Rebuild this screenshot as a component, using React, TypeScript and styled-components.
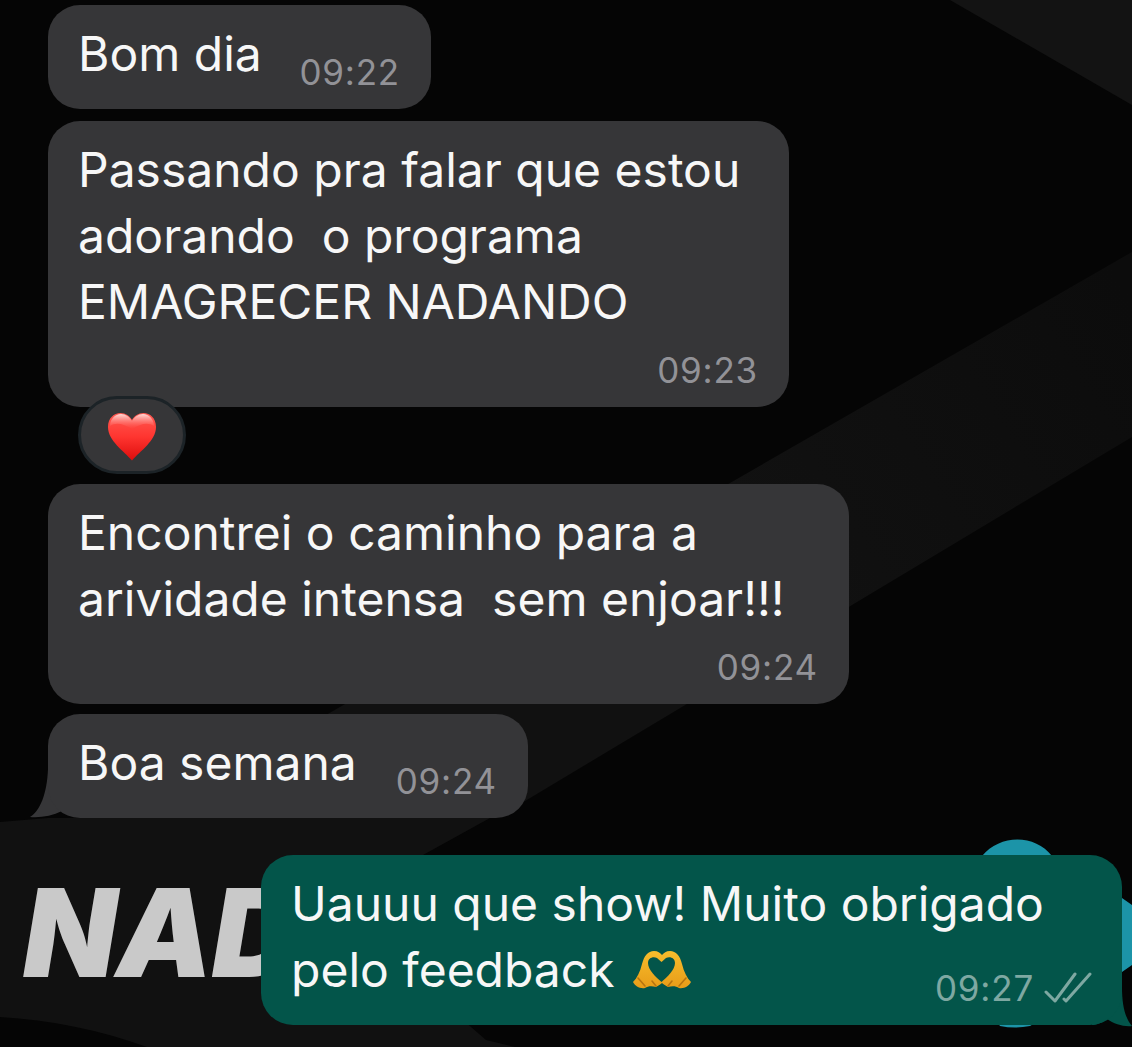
import React from 'react';
import styled, {createGlobalStyle} from 'styled-components';

const GlobalStyle = createGlobalStyle`
    html, body {
        margin: 0;
        padding: 0;
        background: #050505;
    }
`

const Heart = () => (
    <svg width="50" height="50" viewBox="0 0 50 50">
        <defs>
            <linearGradient id="heartFill" x1="0" y1="0" x2="0" y2="1">
                <stop offset="0" stopColor="#ff5a52"/>
                <stop offset="0.5" stopColor="#ff3530"/>
                <stop offset="1" stopColor="#dd0d0d"/>
            </linearGradient>
            <linearGradient id="heartGloss" x1="0" y1="0" x2="0" y2="1">
                <stop offset="0" stopColor="#ffe3e0" stopOpacity="0.95"/>
                <stop offset="1" stopColor="#ff6a64" stopOpacity="0"/>
            </linearGradient>
        </defs>
        <path
            d="M25 48.500C17 39 1 29 1 15 1 6 7 1 13.500 1 18.500 1 22.800 4 25 8 27.200 4 31.500 1 36.500 1 43 1 49 6 49 15 49 29 33 39 25 48.500Z"
            fill="url(#heartFill)"/>
        <path
            d="M3 14C3 7 8 2 14 2 18.500 2 22.800 5 25 9 27.200 5 31.500 2 36 2 42 2 47 7 47 14 41 10 33 12 25 17 17 12 9 10 3 14Z"
            fill="url(#heartGloss)"/>
    </svg>
);

const HeartHands = () => (
    <svg width="60" height="40" viewBox="0 0 60 40">
        <defs>
            <linearGradient id="handFill" x1="0" y1="0" x2="0" y2="1">
                <stop offset="0" stopColor="#f7bd2c"/>
                <stop offset="1" stopColor="#e89c18"/>
            </linearGradient>
        </defs>
        <path
            d="M1 32C5 28 8 22 10 14 12 6 16 1 22 1 26 1 28 3 30 5 32 3 34 1 38 1 44 1 48 6 50 14 52 22 55 28 59 32 57 36 52 39 47 38 44 36 40 36 36 37 33 35 31 34 30 33 29 34 27 35 24 37 20 36 16 36 13 38 8 39 3 36 1 32Z"
            fill="url(#handFill)"/>
        <path d="M29.500 32C24 27 16 20 16 13 16 8 21 6 25 8L29.500 12 34 8C38 6 43 8 43 13 43 20 35 27 29.500 32Z"
              fill="#03554a"/>
        <path d="M6 28L13 36M54 28L47 36M24 36L20 31M36 36L40 31" stroke="#b8740f"
              strokeWidth="1.600" fill="none" strokeLinecap="round"/>
    </svg>
);

const DoubleCheck = () => (
    <svg width="48" height="32" viewBox="0 0 48 32" fill="none" stroke="#7ea8a2" strokeWidth="3"
         strokeLinecap="round" strokeLinejoin="round">
        <path d="M2 20L11 29 31 2"/>
        <path d="M20 27L22 29 46 2"/>
    </svg>
);

export default function App() {
    return (
        <Page>
            <GlobalStyle/>
            <Wallpaper>
                <svg width="1132" height="1047" viewBox="0 0 1132 1047">
                    <defs>
                        <linearGradient id="band" x1="1132" y1="300" x2="500" y2="700" gradientUnits="userSpaceOnUse">
                            <stop offset="0" stopColor="#0c0c0c"/>
                            <stop offset="0.6" stopColor="#111111"/>
                        </linearGradient>
                    </defs>
                    <path d="M950 0L1132 105V0Z" fill="#131313"/>
                    <path d="M1132 252L300 730 520 804 1132 437Z" fill="url(#band)"/>
                    <path d="M0 822L48 818H490L423 855 440 1000 486 1040 515 1047H147C100 1030 50 1020 0 1017Z"
                          fill="#111111"/>
                    <path
                        d="M982 856C1000 834 1035 834 1052 856L1122 898 1132 905V965L1122 972 1030 1026Q1015 1029 1000 1026L982 1000Z"
                        fill="#1c94a8"/>
                </svg>
                <Logo>NAD</Logo>
            </Wallpaper>
            <Chat>
                <Bubble width={383}>
                    <InlineRow>
                        <Text>Bom dia</Text>
                        <Time>09:22</Time>
                    </InlineRow>
                </Bubble>
                <Bubble width={741} spacing={12}>
                    <Text>Passando pra falar que estou{'\n'}adorando  o programa{'\n'}EMAGRECER NADANDO</Text>
                    <Footer>
                        <Time>09:23</Time>
                    </Footer>
                    <Reaction>
                        <Heart/>
                    </Reaction>
                </Bubble>
                <Bubble width={801} spacing={77}>
                    <Text>Encontrei o caminho para a{'\n'}arividade intensa  sem enjoar!!!</Text>
                    <Footer>
                        <Time>09:24</Time>
                    </Footer>
                </Bubble>
                <Bubble width={480} spacing={10}>
                    <InlineRow>
                        <Text>Boa semana</Text>
                        <Time>09:24</Time>
                    </InlineRow>
                    <TailIn width="60" height="49" viewBox="0 0 60 49">
                        <path d="M18 0C17 25 10 42 0 48 10 49 22 47 32 42 38 46 44 48 50 48H60V0Z" fill="#363638"/>
                    </TailIn>
                </Bubble>
                <OutBubble>
                    <Text>Uauuu que show! Muito obrigado</Text>
                    <LastLine>
                        <Text>pelo feedback <EmojiSlot><HeartHands/></EmojiSlot></Text>
                        <OutMeta>
                            <Time outgoing>09:27</Time>
                            <DoubleCheck/>
                        </OutMeta>
                    </LastLine>
                    <TailOut width="40" height="40" viewBox="0 0 40 40">
                        <path d="M30 0C30 18 33 31 40 39 32 40 22 37 15 32 10 36 4 38 0 38V0Z" fill="#03554a"/>
                    </TailOut>
                </OutBubble>
            </Chat>
        </Page>
    );
};

const Page = styled.div`
    position: relative;
    width: 1132px;
    height: 1047px;
    overflow: hidden;
    background: #050505;
    font-family: Inter, "Noto Sans", sans-serif;
`

const Wallpaper = styled.div`
    position: absolute;
    inset: 0;

    svg {
        display: block;
    }
`

const Logo = styled.span`
    position: absolute;
    left: 23px;
    top: 860px;
    font-family: Inter, sans-serif;
    font-size: 122px;
    line-height: 146px;
    font-weight: 900;
    font-style: italic;
    letter-spacing: -1px;
    color: #c9c9c9;
`

const Chat = styled.div`
    position: relative;
    isolation: isolate;
    display: flex;
    flex-direction: column;
    padding: 5px 10px 0 48px;
`

const Bubble = styled.div<{ width: number; spacing?: number }>`
    position: relative;
    box-sizing: border-box;
    width: ${props => props.width}px;
    margin-top: ${props => props.spacing ?? 0}px;
    padding: 16px 31px 17px 30px;
    border-radius: 32px;
    background: #363638;
`

const OutBubble = styled.div`
    position: relative;
    box-sizing: border-box;
    width: 861px;
    margin: 37px 0 0 213px;
    padding: 16px 30px 17px 30px;
    border-radius: 32px;
    background: #03554a;
`

const Text = styled.div`
    font-size: 48px;
    line-height: 66px;
    color: #f7f7f7;
    white-space: pre;
`

const Time = styled.span<{ outgoing?: boolean }>`
    font-size: 35px;
    line-height: 40px;
    letter-spacing: 0.8px;
    color: ${props => (props.outgoing ? '#7ea8a2' : '#929297')};
`

const InlineRow = styled.div`
    display: flex;
    justify-content: space-between;
    align-items: flex-end;

    ${Text} {
        padding-bottom: 5px;
    }
`

const Footer = styled.div`
    display: flex;
    justify-content: flex-end;
    margin-top: 15px;
    height: 40px;
`

const LastLine = styled.div`
    display: flex;
    justify-content: space-between;
    align-items: flex-end;

    ${Text} {
        padding-bottom: 5px;
    }
`

const OutMeta = styled.div`
    display: flex;
    align-items: center;
    gap: 10px;
`

const EmojiSlot = styled.span`
    display: inline-block;
    margin-left: 4px;
    line-height: 0;
    vertical-align: -3px;

    svg {
        display: block;
    }
`

const Reaction = styled.div`
    position: absolute;
    left: 30px;
    top: 275px;
    box-sizing: border-box;
    width: 108px;
    height: 78px;
    padding-top: 3px;
    display: flex;
    align-items: center;
    justify-content: center;
    border-radius: 39px;
    border: 3px solid #1c2327;
    background: #363638;
`

const TailIn = styled.svg`
    position: absolute;
    z-index: -1;
    left: -18px;
    bottom: 0;
`

const TailOut = styled.svg`
    position: absolute;
    z-index: -1;
    right: -10px;
    bottom: -2px;
`
